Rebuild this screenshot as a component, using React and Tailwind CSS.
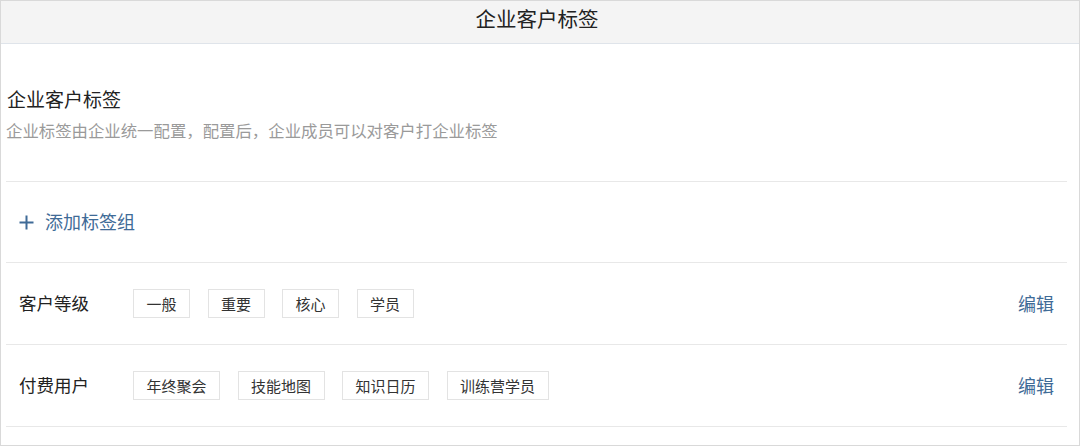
import React from 'react';

const groups = [
  { name: '客户等级', tags: ['一般', '重要', '核心', '学员'] },
  { name: '付费用户', tags: ['年终聚会', '技能地图', '知识日历', '训练营学员'] },
];

const PlusIcon = () => (
  <svg width="15" height="15" viewBox="0 0 15 15" className="text-[#3f6b97]">
    <path d="M7.5 0.5v14M0.5 7.5h14" stroke="currentColor" strokeWidth="2" />
  </svg>
);

const App = () => {
  return (
    <div
      className="w-[1080px] h-[446px] border border-[#d9d9d9] bg-white flex flex-col"
      style={{ fontFamily: '"Noto Sans CJK SC", "Noto Sans", sans-serif' }}
    >
      {/* Header */}
      <div className="h-[43px] shrink-0 bg-[#f4f4f4] border-b border-[#dfe4ea] flex items-center justify-center">
        <span className="text-[20.5px] leading-[28px] text-[#222] -mt-[8px] -ml-[6px]">企业客户标签</span>
      </div>

      <div className="pl-[5px] pr-[12px] flex flex-col">
        {/* Intro */}
        <div className="pt-[41px] pb-[39px] border-b border-[#e8e8e8]">
          <h2 className="text-[19px] leading-[28px] text-[#222] pl-[1px]">企业客户标签</h2>
          <p className="mt-[5px] text-[16.4px] leading-[24px] text-[#9a9a9a]">
            企业标签由企业统一配置，配置后，企业成员可以对客户打企业标签
          </p>
        </div>

        {/* Add group */}
        <div className="h-[81px] border-b border-[#e8e8e8] flex items-center pl-[13px] gap-[11px]">
          <PlusIcon />
          <span className="text-[18px] leading-[26px] text-[#3f6b97] -mt-[2px]">添加标签组</span>
        </div>

        {/* Groups */}
        {groups.map((g) => (
          <div key={g.name} className="h-[82px] border-b border-[#e8e8e8] flex items-center pl-[13px] pr-[13px]">
            <div className="w-[114px] shrink-0 text-[17.5px] leading-[26px] text-[#222] -mt-[2px]">{g.name}</div>
            <div className="flex items-center gap-[17.5px] flex-1">
              {g.tags.map((t) => (
                <span
                  key={t}
                  className="h-[29px] px-[12.5px] border border-[#e3e3e3] text-[15px] leading-[27px] text-[#333] whitespace-nowrap"
                >
                  {t}
                </span>
              ))}
            </div>
            <button className="text-[18px] leading-[26px] text-[#3f6b97] -mt-[2px]">编辑</button>
          </div>
        ))}
      </div>
    </div>
  );
};

export default App;
